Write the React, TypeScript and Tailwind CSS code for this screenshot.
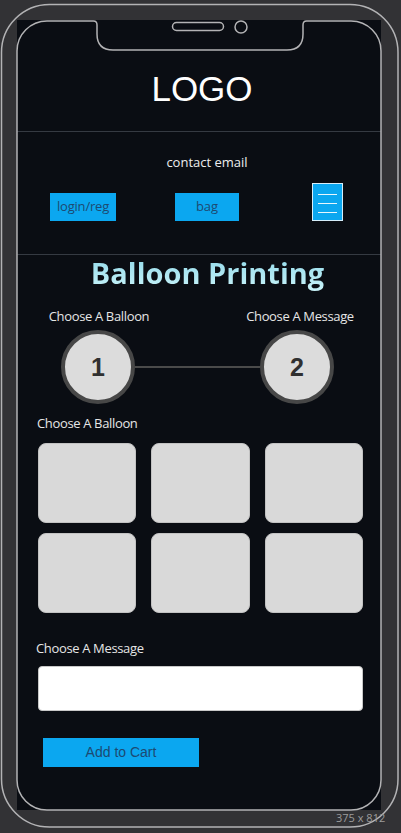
import React from 'react';

const openSans = "font-['Open_Sans',sans-serif]";

const PhoneFrame: React.FC = () => (
  <svg
    className="pointer-events-none absolute left-0 top-0"
    width="401"
    height="833"
    viewBox="0 0 401 833"
    fill="none"
  >
    {/* outer body */}
    <rect x="1.5" y="4.5" width="396.5" height="822.5" rx="48" stroke="#b3b3b5" strokeWidth="1.5" />
    {/* screen outline with notch */}
    <path
      d="M47 21 H93.5 Q97 21 97 25 V34 Q97 50 113 50 H287 Q303 50 303 34 V25 Q303 21 306.5 21 H351 A30 30 0 0 1 381 51 V780 A30 30 0 0 1 351 810 H47 A30 30 0 0 1 17 780 V51 A30 30 0 0 1 47 21 Z"
      stroke="#b3b3b5"
      strokeWidth="1.5"
    />
    {/* speaker + camera */}
    <rect x="172.5" y="22.5" width="51" height="8" rx="4" stroke="#b3b3b5" strokeWidth="1.5" />
    <circle cx="241" cy="27" r="6" stroke="#b3b3b5" strokeWidth="1.5" />
  </svg>
);

const StepCircle: React.FC<{ n: number }> = ({ n }) => (
  <div className="flex h-[74px] w-[74px] shrink-0 items-center justify-center rounded-full border-4 border-[#474747] bg-[#dcdcdc]">
    <span className="font-['Liberation_Sans',sans-serif] text-[25px] font-bold leading-none text-[#303030]">{n}</span>
  </div>
);

export default function App() {
  const tiles = [0, 1, 2, 3, 4, 5];

  return (
    <div className="relative h-[833px] w-[401px] overflow-hidden bg-[#323235]">
      <div className={`ml-[17px] mt-[20px] flex h-[790px] w-[364px] flex-col bg-[#0a0d13] ${openSans}`}>
        {/* Logo */}
        <header className="flex h-[111px] justify-center pl-[6px] pt-[51px]">
          <span className="font-['Liberation_Sans',sans-serif] text-[35px] leading-[35px] text-white">LOGO</span>
        </header>
        <div className="h-px bg-[#353a42]" />

        {/* Nav */}
        <nav className="h-[122px]">
          <div className="flex justify-center pl-[16px] pt-[21px]">
            <span className="text-[13px] leading-[18px] text-[#eeeeee]">contact email</span>
          </div>
          <div className="mt-[12px] flex items-end pl-[33px]">
            <button className="flex h-[28px] w-[66px] items-center justify-center bg-[#0ba7f0] text-[13px] tracking-[-0.2px] text-[#1d4a72]">
              login/reg
            </button>
            <button className="ml-[59px] flex h-[28px] w-[64px] items-center justify-center bg-[#0ba7f0] text-[13px] text-[#1d4a72]">
              bag
            </button>
            <button className="ml-[73px] flex h-[38px] w-[31px] flex-col items-center gap-[8px] border border-[#d6eefa] bg-[#0ba7f0] pt-[10px]">
              <span className="h-px w-[19px] bg-[#e8f6fd]" />
              <span className="h-px w-[19px] bg-[#e8f6fd]" />
              <span className="h-px w-[19px] bg-[#e8f6fd]" />
            </button>
          </div>
        </nav>
        <div className="h-px bg-[#353a42]" />

        {/* Title */}
        <div className="flex justify-center pl-[17px]">
          <h1 className="bg-gradient-to-b from-[#8fd9ea] to-[#c9f3f9] bg-clip-text text-[29px] font-bold leading-[36px] text-transparent">
            Balloon Printing
          </h1>
        </div>

        {/* Steps */}
        <div className="mt-[16px] flex justify-between pl-[17px] pr-[16px] text-[13px] leading-[18px] tracking-[-0.35px] text-[#e6e6e6]">
          <span className="w-[130px] text-center">Choose A Balloon</span>
          <span className="w-[130px] text-center">Choose A Message</span>
        </div>
        <div className="mt-[5px] flex items-center pl-[44px] pr-[47px]">
          <StepCircle n={1} />
          <div className="h-[2px] flex-1 bg-[#4a4a4a]" />
          <StepCircle n={2} />
        </div>

        {/* Balloons */}
        <div className="mt-[10px] pl-[20px] text-[13px] leading-[18px] tracking-[-0.35px] text-[#e6e6e6]">Choose A Balloon</div>
        <div className="ml-[21px] mt-[11px] grid w-[325px] grid-cols-3 gap-x-[15px] gap-y-[10px]">
          {tiles.map((t) => (
            <div key={t} className="h-[80px] rounded-[8px] border border-[#c2c2c2] bg-[#d9d9d9]" />
          ))}
        </div>

        {/* Message */}
        <div className="mt-[26px] pl-[19px] text-[13px] leading-[18px] tracking-[-0.35px] text-[#e6e6e6]">Choose A Message</div>
        <input
          className="ml-[21px] mt-[9px] h-[45px] w-[325px] rounded-[4px] border border-[#c8c8c8] bg-white px-2 text-[14px] outline-none"
          type="text"
        />

        <button className="ml-[26px] mt-[27px] flex h-[29px] w-[156px] items-center justify-center bg-[#0ba7f0] font-['Liberation_Sans',sans-serif] text-[14px] text-[#1d4a72]">
          Add to Cart
        </button>
      </div>

      <PhoneFrame />
      <span className={`absolute left-[336px] top-[811px] text-[11px] leading-[14px] text-[#9c9c9c] ${openSans}`}>
        375 x 812
      </span>
    </div>
  );
}
